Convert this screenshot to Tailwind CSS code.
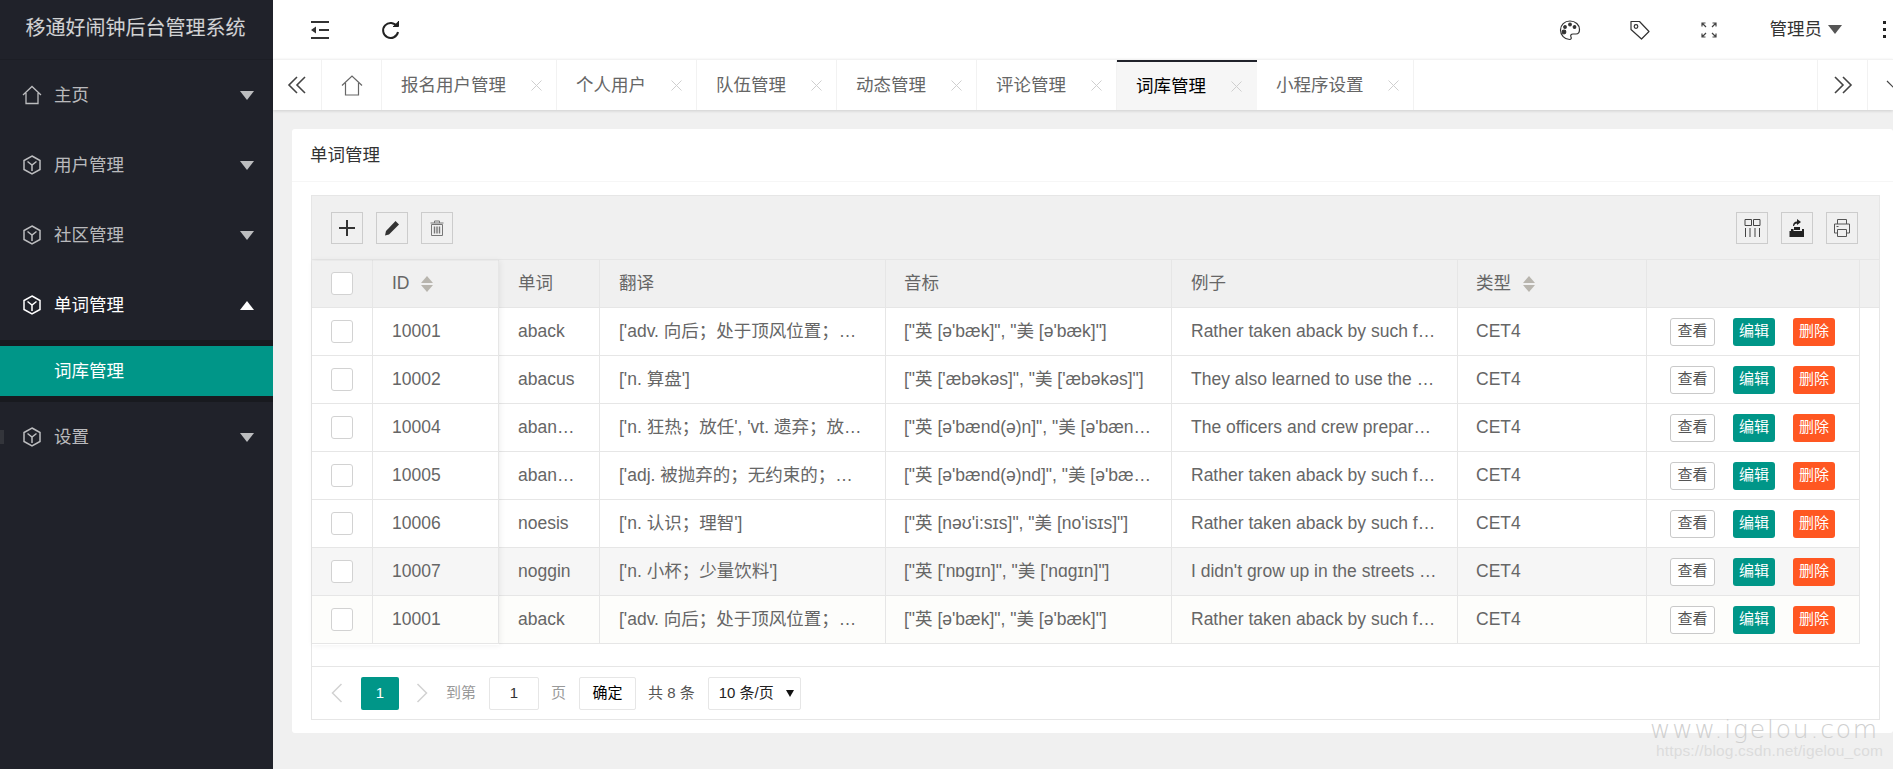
<!DOCTYPE html>
<html lang="zh-CN">
<head>
  <meta charset="UTF-8">
  <title>移通好闹钟后台管理系统</title>
  <script src="https://cdn.jsdelivr.net/npm/@tailwindcss/browser@4"></script>
</head>
<body class="h-screen overflow-hidden bg-[#f0f0f0] text-[17.5px] text-[#666] [font-family:'Liberation_Sans','Noto_Sans_CJK_SC',sans-serif]">
  <div class="flex h-[769px]">

    <!-- Sidebar -->
    <aside class="relative w-[273px] shrink-0 bg-[#20222a] text-white/70">
      <div class="flex h-[60px] items-center justify-center border-b border-[#1c1e25] pb-[3px] pr-[2px] text-[20px] text-white/80">移通好闹钟后台管理系统</div>
      <nav>
        <div class="flex h-[70px] items-center pl-[22px] pr-[19px]">
          <svg class="mr-[12px] h-[20px] w-[20px]" viewBox="0 0 20 20" fill="none" stroke="currentColor" stroke-width="1.3"><path d="M1 10 10 1.5 19 10M4 8v10.500h12V8"/></svg>
          <span class="flex-1">主页</span>
          <span class="h-0 w-0 border-x-[7.5px] border-t-[9px] border-x-transparent border-t-white/70"></span>
        </div>
        <div class="flex h-[70px] items-center pl-[22px] pr-[19px]">
          <svg class="mr-[12px] h-[20px] w-[20px]" viewBox="0 0 20 20" fill="none" stroke="currentColor" stroke-width="1.5"><path d="M10 1 18 5.500v9L10 19 2 14.500v-9zM5.500 6.500 10 10l4.500-3.500M10 10v6"/></svg>
          <span class="flex-1">用户管理</span>
          <span class="h-0 w-0 border-x-[7.5px] border-t-[9px] border-x-transparent border-t-white/70"></span>
        </div>
        <div class="flex h-[70px] items-center pl-[22px] pr-[19px]">
          <svg class="mr-[12px] h-[20px] w-[20px]" viewBox="0 0 20 20" fill="none" stroke="currentColor" stroke-width="1.5"><path d="M10 1 18 5.500v9L10 19 2 14.500v-9zM5.500 6.500 10 10l4.500-3.500M10 10v6"/></svg>
          <span class="flex-1">社区管理</span>
          <span class="h-0 w-0 border-x-[7.5px] border-t-[9px] border-x-transparent border-t-white/70"></span>
        </div>
        <div class="flex h-[70px] items-center pl-[22px] pr-[19px] text-white">
          <svg class="mr-[12px] h-[20px] w-[20px]" viewBox="0 0 20 20" fill="none" stroke="currentColor" stroke-width="1.5"><path d="M10 1 18 5.500v9L10 19 2 14.500v-9zM5.500 6.500 10 10l4.500-3.500M10 10v6"/></svg>
          <span class="flex-1">单词管理</span>
          <span class="h-0 w-0 border-x-[7.5px] border-b-[9px] border-x-transparent border-b-white"></span>
        </div>
        <div class="bg-[#181a1f] py-[6px]">
          <div class="flex h-[50px] items-center bg-[#009688] pl-[54px] text-white">词库管理</div>
        </div>
        <div class="flex h-[70px] items-center pl-[22px] pr-[19px]">
          <svg class="mr-[12px] h-[20px] w-[20px]" viewBox="0 0 20 20" fill="none" stroke="currentColor" stroke-width="1.5"><path d="M10 1 18 5.500v9L10 19 2 14.500v-9zM5.500 6.500 10 10l4.500-3.500M10 10v6"/></svg>
          <span class="flex-1">设置</span>
          <span class="h-0 w-0 border-x-[7.5px] border-t-[9px] border-x-transparent border-t-white/70"></span>
        </div>
      </nav>
      <div class="absolute left-0 top-[430px] h-[14px] w-[4px] bg-[#33353b]"></div>
    </aside>

    <main class="flex min-w-0 flex-1 flex-col">
      <!-- Top bar -->
      <header class="flex h-[59px] shrink-0 items-center bg-white pl-[37px] text-[#333]">
        <svg class="h-[20px] w-[20px]" viewBox="0 0 20 20" fill="#333"><path d="M1 1h18v2H1zM1 17h18v2H1zM9 9h10v2H9zM1 10l5-3.500v7z"/></svg>
        <svg class="ml-[51px] h-[20px] w-[20px]" viewBox="0 0 20 20" fill="none" stroke="#222" stroke-width="2"><path d="M16 6.500A7.500 7.500 0 1 0 17 12"/><path d="M12 6.500h5.500V1" fill="#222" stroke-width="1"/></svg>
        <div class="ml-auto flex items-center">
          <svg class="h-[22px] w-[22px]" viewBox="0 0 22 22" fill="none" stroke="#333" stroke-width="1.2"><path d="M11 2C5.500 2 1.500 6 1.500 11s4 9.500 9 9.500c2 0 2-1.500 1.500-2.500-.8-1.500 0-3 2-3h3c2 0 3.500-1.500 3.500-4.500C20.500 6 16.500 2 11 2z"/><circle cx="6" cy="8" r="1.300" fill="#333"/><circle cx="11" cy="5.500" r="1.300" fill="#333"/><circle cx="15.500" cy="8" r="1.300" fill="#333"/><circle cx="5" cy="13" r="1.800" fill="#333"/></svg>
          <svg class="ml-[48px] h-[22px] w-[22px]" viewBox="0 0 22 22" fill="none" stroke="#333" stroke-width="1.2"><path d="M2 2.500h8.500l9.500 10-7.500 7.500L2 10.500z" stroke-linejoin="round"/><circle cx="7" cy="7.500" r="1.800"/></svg>
          <svg class="ml-[49px] h-[18px] w-[18px]" viewBox="0 0 18 18" fill="none" stroke="#444" stroke-width="1.200"><path d="M2 5.500V2h3.500M2 2l4 4M16 5.500V2h-3.500M16 2l-4 4M2 12.500V16h3.500M2 16l4-4M16 12.500V16h-3.500M16 16l-4-4"/></svg>
          <span class="ml-[52px] text-[#333]">管理员</span>
          <span class="ml-[6px] h-0 w-0 border-x-[7.500px] border-t-[9px] border-x-transparent border-t-[#555]"></span>
          <span class="ml-[41px] mr-[7px] flex flex-col gap-[4px]">
            <i class="h-[3px] w-[3px] bg-[#222]"></i><i class="h-[3px] w-[3px] bg-[#222]"></i><i class="h-[3px] w-[3px] bg-[#222]"></i>
          </span>
        </div>
      </header>

      <!-- Tabs -->
      <div class="z-10 flex h-[51px] shrink-0 items-stretch overflow-hidden border-t border-[#f2f2f2] bg-white shadow-[0_1px_3px_rgba(0,0,0,0.14)]">
        <div class="flex w-[49px] items-center justify-center border-r border-[#f2f2f2]">
          <svg class="h-[20px] w-[20px]" viewBox="0 0 20 20" fill="none" stroke="#444" stroke-width="1.600"><path d="M10 2 2 10l8 8M18 2l-8 8 8 8"/></svg>
        </div>
        <div class="flex w-[60px] items-center justify-center border-r border-[#f2f2f2]">
          <svg class="h-[21px] w-[22px]" viewBox="0 0 22 21" fill="none" stroke="#666" stroke-width="1.200"><path d="M1 10.500 11 1l10 9.500M4.500 8v12h13V8"/></svg>
        </div>
        <div class="flex w-[175px] items-center border-r border-[#f2f2f2] pl-[19px]"><span class="w-[130px]">报名用户管理</span><span class="text-[#cfcfcf]"><svg class="h-[11px] w-[11px]" viewBox="0 0 11 11" stroke="currentColor"><path d="M.5.500l10 10M10.500.500l-10 10"/></svg></span></div>
        <div class="flex w-[140px] items-center border-r border-[#f2f2f2] pl-[19px]"><span class="w-[95px]">个人用户</span><span class="text-[#cfcfcf]"><svg class="h-[11px] w-[11px]" viewBox="0 0 11 11" stroke="currentColor"><path d="M.5.500l10 10M10.500.500l-10 10"/></svg></span></div>
        <div class="flex w-[140px] items-center border-r border-[#f2f2f2] pl-[19px]"><span class="w-[95px]">队伍管理</span><span class="text-[#cfcfcf]"><svg class="h-[11px] w-[11px]" viewBox="0 0 11 11" stroke="currentColor"><path d="M.5.500l10 10M10.500.500l-10 10"/></svg></span></div>
        <div class="flex w-[140px] items-center border-r border-[#f2f2f2] pl-[19px]"><span class="w-[95px]">动态管理</span><span class="text-[#cfcfcf]"><svg class="h-[11px] w-[11px]" viewBox="0 0 11 11" stroke="currentColor"><path d="M.5.500l10 10M10.500.500l-10 10"/></svg></span></div>
        <div class="flex w-[140px] items-center border-r border-[#f2f2f2] pl-[19px]"><span class="w-[95px]">评论管理</span><span class="text-[#cfcfcf]"><svg class="h-[11px] w-[11px]" viewBox="0 0 11 11" stroke="currentColor"><path d="M.5.500l10 10M10.500.500l-10 10"/></svg></span></div>
        <div class="-mt-px flex w-[140px] items-center border-t-[3px] border-[#20222a] bg-[#f6f6f6] pl-[19px] text-black"><span class="w-[95px]">词库管理</span><span class="text-[#cfcfcf]"><svg class="h-[11px] w-[11px]" viewBox="0 0 11 11" stroke="currentColor"><path d="M.5.500l10 10M10.500.500l-10 10"/></svg></span></div>
        <div class="flex w-[157px] items-center border-r border-[#f2f2f2] pl-[19px]"><span class="w-[112px]">小程序设置</span><span class="text-[#cfcfcf]"><svg class="h-[11px] w-[11px]" viewBox="0 0 11 11" stroke="currentColor"><path d="M.5.500l10 10M10.500.500l-10 10"/></svg></span></div>
        <div class="flex-1 border-r border-[#f2f2f2]"></div>
        <div class="flex w-[50px] items-center justify-center border-r border-[#f2f2f2]">
          <svg class="h-[20px] w-[20px]" viewBox="0 0 20 20" fill="none" stroke="#444" stroke-width="1.600"><path d="m2 2 8 8-8 8M10 2l8 8-8 8"/></svg>
        </div>
        <div class="flex w-[25px] items-center pl-[18px]">
          <svg class="h-[20px] w-[20px] shrink-0" viewBox="0 0 20 20" fill="none" stroke="#444" stroke-width="1.200"><path d="m1 6 9 9 9-9"/></svg>
        </div>
      </div>

      <!-- Content -->
      <div class="min-w-0 flex-1 pl-[19px] pt-[19px]">
        <section class="h-[604px] rounded-[3px] bg-white">
          <div class="flex h-[53px] items-center border-b border-[#f6f6f6] pl-[18px] text-[#333]">单词管理</div>
          <div class="pl-[19px] pr-[13px] pt-[13px]">
            <div class="relative h-[525px] border border-[#e6e6e6]">
              <!-- Toolbar -->
              <div class="flex h-[64px] items-center justify-between border-b border-[#e6e6e6] bg-[#f0f0f0] pl-[19px] pr-[21px]">
                <div class="flex gap-[13px]">
                  <button class="flex h-[32px] w-[32px] items-center justify-center border border-[#ccc]"><svg class="h-[16px] w-[16px]" viewBox="0 0 16 16" fill="#333"><path d="M7 0h2v7h7v2H9v7H7V9H0V7h7z"/></svg></button>
                  <button class="flex h-[32px] w-[32px] items-center justify-center border border-[#ccc]"><svg class="h-[16px] w-[16px]" viewBox="0 0 16 16" fill="#333"><path d="M11.500 1 15 4.500 5 14.500 1 15.500 2 11z"/></svg></button>
                  <button class="flex h-[32px] w-[32px] items-center justify-center border border-[#ccc]"><svg class="h-[16px] w-[14px]" viewBox="0 0 14 16" fill="none" stroke="#777"><path d="M.5 3h13M4.500 3V1h5v2M1.500 4.500h11V15.500h-11z"/><path d="M4.500 6.500v7M7 6.500v7M9.500 6.500v7" stroke-width="1.400"/></svg></button>
                </div>
                <div class="flex gap-[13px]">
                  <button class="flex h-[32px] w-[32px] items-center justify-center border border-[#ccc]"><svg class="h-[20px] w-[17px]" viewBox="0 0 17 20" fill="none" stroke="#444"><path d="M1 1.500h6.500v6H1zM9.500 1.500H16v6H9.500zM1.500 10v9M6 10v9M11 10v9M15.500 10v9"/></svg></button>
                  <button class="flex h-[32px] w-[32px] items-center justify-center border border-[#ccc]"><svg class="h-[20px] w-[16px]" viewBox="0 0 16 20" fill="#222"><path d="M2 11h2.500v2H13v-2h2v8H.5v-6H2z"/><path d="M8 1l4 3-4 3V5.500c-1.500 0-2.500.8-3 2.500H4c0-2.800 1.500-4.500 4-4.500z"/><path d="M5 9h6v3H5z"/></svg></button>
                  <button class="flex h-[32px] w-[32px] items-center justify-center border border-[#ccc]"><svg class="h-[20px] w-[18px]" viewBox="0 0 18 20" fill="none" stroke="#555"><path d="M4.500 6V1.500h9V6M4.500 15H1.500V6h15v9h-3M4.500 11.500h9v7h-9zM3.500 8.500h2"/></svg></button>
                </div>
              </div>

              <!-- Table -->
              <table class="w-[1567px] table-fixed border-separate border-spacing-0">
                <colgroup>
                  <col class="w-[61px]"><col class="w-[126px]"><col class="w-[101px]"><col class="w-[286px]"><col class="w-[286px]"><col class="w-[286px]"><col class="w-[189px]"><col class="w-[213px]"><col class="w-[19px]">
                </colgroup>
                <thead>
                  <tr class="h-[48px] bg-[#f0f0f0] text-left font-normal">
                    <th class="border-b border-r border-[#e6e6e6] pl-[19px] font-normal"><div class="h-[23px] w-[22px] rounded-[3px] border border-[#d2d2d2] bg-white"></div></th>
                    <th class="border-b border-r border-[#e6e6e6] pl-[19px] font-normal">
                      <span class="flex items-center gap-[11px]">ID
                        <span class="flex flex-col gap-[2px]"><i class="h-0 w-0 border-x-[6px] border-b-[7px] border-x-transparent border-b-[#b8b5ae]"></i><i class="h-0 w-0 border-x-[6px] border-t-[7px] border-x-transparent border-t-[#b8b5ae]"></i></span>
                      </span>
                    </th>
                    <th class="border-b border-r border-[#e6e6e6] pl-[19px] font-normal">单词</th>
                    <th class="border-b border-r border-[#e6e6e6] pl-[19px] font-normal">翻译</th>
                    <th class="border-b border-r border-[#e6e6e6] pl-[18px] font-normal">音标</th>
                    <th class="border-b border-r border-[#e6e6e6] pl-[19px] font-normal">例子</th>
                    <th class="border-b border-r border-[#e6e6e6] pl-[18px] font-normal">
                      <span class="flex items-center gap-[12px]">类型
                        <span class="flex flex-col gap-[2px]"><i class="h-0 w-0 border-x-[6px] border-b-[7px] border-x-transparent border-b-[#b8b5ae]"></i><i class="h-0 w-0 border-x-[6px] border-t-[7px] border-x-transparent border-t-[#b8b5ae]"></i></span>
                      </span>
                    </th>
                    <th class="border-b border-r border-[#e6e6e6]"></th>
                    <th class="border-b border-[#e6e6e6]"></th>
                  </tr>
                </thead>
                <tbody id="rows"></tbody>
              </table>
              <!-- shadow of the fixed left columns -->
              <div class="pointer-events-none absolute left-0 top-[65px] h-[384px] w-[187px] shadow-[1px_0_6px_rgba(0,0,0,0.07)]"></div>

              <!-- Pagination -->
              <div class="absolute bottom-0 left-0 right-0 flex h-[53px] items-center border-t border-[#e6e6e6] pl-[19px] text-[15px] text-[#333]">
                <svg class="h-[20px] w-[12px]" viewBox="0 0 12 20" fill="none" stroke="#d2d2d2" stroke-width="1.500"><path d="M10.500 1 1.500 10l9 9"/></svg>
                <span class="ml-[18px] flex h-[33px] w-[38px] items-center justify-center rounded-[2px] bg-[#009688] text-white">1</span>
                <svg class="ml-[17px] h-[20px] w-[12px]" viewBox="0 0 12 20" fill="none" stroke="#d2d2d2" stroke-width="1.500"><path d="m1.500 1 9 9-9 9"/></svg>
                <span class="ml-[18px] text-[#999]">到第</span>
                <span class="ml-[13px] flex h-[33px] w-[50px] items-center justify-center rounded-[2px] border border-[#e6e6e6] text-[#333]">1</span>
                <span class="ml-[12px] text-[#999]">页</span>
                <span class="ml-[13px] flex h-[33px] w-[57px] items-center justify-center rounded-[2px] border border-[#e6e6e6] text-black">确定</span>
                <span class="ml-[12px] text-[#555]">共 8 条</span>
                <span class="ml-[13px] flex h-[33px] w-[93px] items-center rounded-[2px] border border-[#e6e6e6] pl-[10px] text-[#222]">10 条/页<span class="ml-[12px] h-0 w-0 border-x-[4px] border-t-[7px] border-x-transparent border-t-[#111]"></span></span>
              </div>
            </div>
          </div>
        </section>
      </div>
    </main>
  </div>

  <!-- Image watermark -->
  <div class="absolute left-[1650px] top-[717px] text-[25px] font-light leading-none tracking-[1.800px] text-[#cfcfcf] [font-family:'DejaVu_Sans',sans-serif]">www.igelou.com</div>
  <div class="absolute left-[1656px] top-[743px] text-[15.500px] leading-none tracking-[0.150px] text-[#dcdcdc]">https://blog.csdn.net/igelou_com</div>

  <script>
    const words = [
      ['10001', 'aback', "['adv. 向后；处于顶风位置；突然地']", '["英 [ə\'bæk]", "美 [ə\'bæk]"]', 'Rather taken aback by such frankness, he hesitated', ''],
      ['10002', 'abacus', "['n. 算盘']", '["英 [\'æbəkəs]", "美 [\'æbəkəs]"]', 'They also learned to use the abacus at school', ''],
      ['10004', 'abandon', "['n. 狂热；放任', 'vt. 遗弃；放弃']", '["英 [ə\'bænd(ə)n]", "美 [ə\'bændən]"]', 'The officers and crew prepared to abandon the ship', ''],
      ['10005', 'abandoned', "['adj. 被抛弃的；无约束的；放荡的']", '["英 [ə\'bænd(ə)nd]", "美 [ə\'bændənd]"]', 'Rather taken aback by such frankness, he hesitated', ''],
      ['10006', 'noesis', "['n. 认识；理智']", '["英 [nəʊ\'i:sɪs]", "美 [no\'isɪs]"]', 'Rather taken aback by such frankness, he hesitated', ''],
      ['10007', 'noggin', "['n. 小杯；少量饮料']", '["英 [\'nɒgɪn]", "美 [\'nɑgɪn]"]', "I didn't grow up in the streets of the big city", 'bg-[#f6f6f6]'],
      ['10001', 'aback', "['adv. 向后；处于顶风位置；突然地']", '["英 [ə\'bæk]", "美 [ə\'bæk]"]', 'Rather taken aback by such frankness, he hesitated', 'bg-[#fdfdfb]']
    ];

    document.getElementById('rows').innerHTML = words.map(w => `
      <tr class="h-[48px] ${w[5]}">
        <td class="border-b border-r border-[#e6e6e6] pl-[19px]"><div class="h-[23px] w-[22px] rounded-[3px] border border-[#d2d2d2] bg-white"></div></td>
        <td class="border-b border-r border-[#e6e6e6] pl-[19px]">${w[0]}</td>
        <td class="truncate border-b border-r border-[#e6e6e6] px-[19px]">${w[1]}</td>
        <td class="truncate border-b border-r border-[#e6e6e6] px-[19px]">${w[2]}</td>
        <td class="truncate border-b border-r border-[#e6e6e6] pl-[18px] pr-[14px]">${w[3]}</td>
        <td class="truncate border-b border-r border-[#e6e6e6] pl-[19px] pr-[19px]">${w[4]}</td>
        <td class="border-b border-r border-[#e6e6e6] pl-[18px]">CET4</td>
        <td class="border-b border-r border-[#e6e6e6] pl-[23px] text-[15px]">
          <div class="flex items-center">
            <span class="flex h-[28px] w-[45px] items-center justify-center rounded-[3px] border border-[#c9c9c9] bg-white text-[#555]">查看</span>
            <span class="ml-[18px] flex h-[28px] w-[42px] items-center justify-center rounded-[3px] bg-[#009688] text-white">编辑</span>
            <span class="ml-[18px] flex h-[28px] w-[42px] items-center justify-center rounded-[3px] bg-[#ff5722] text-white">删除</span>
          </div>
        </td>
        <td class="bg-white"></td>
      </tr>`).join('');
  </script>
</body>
</html>
